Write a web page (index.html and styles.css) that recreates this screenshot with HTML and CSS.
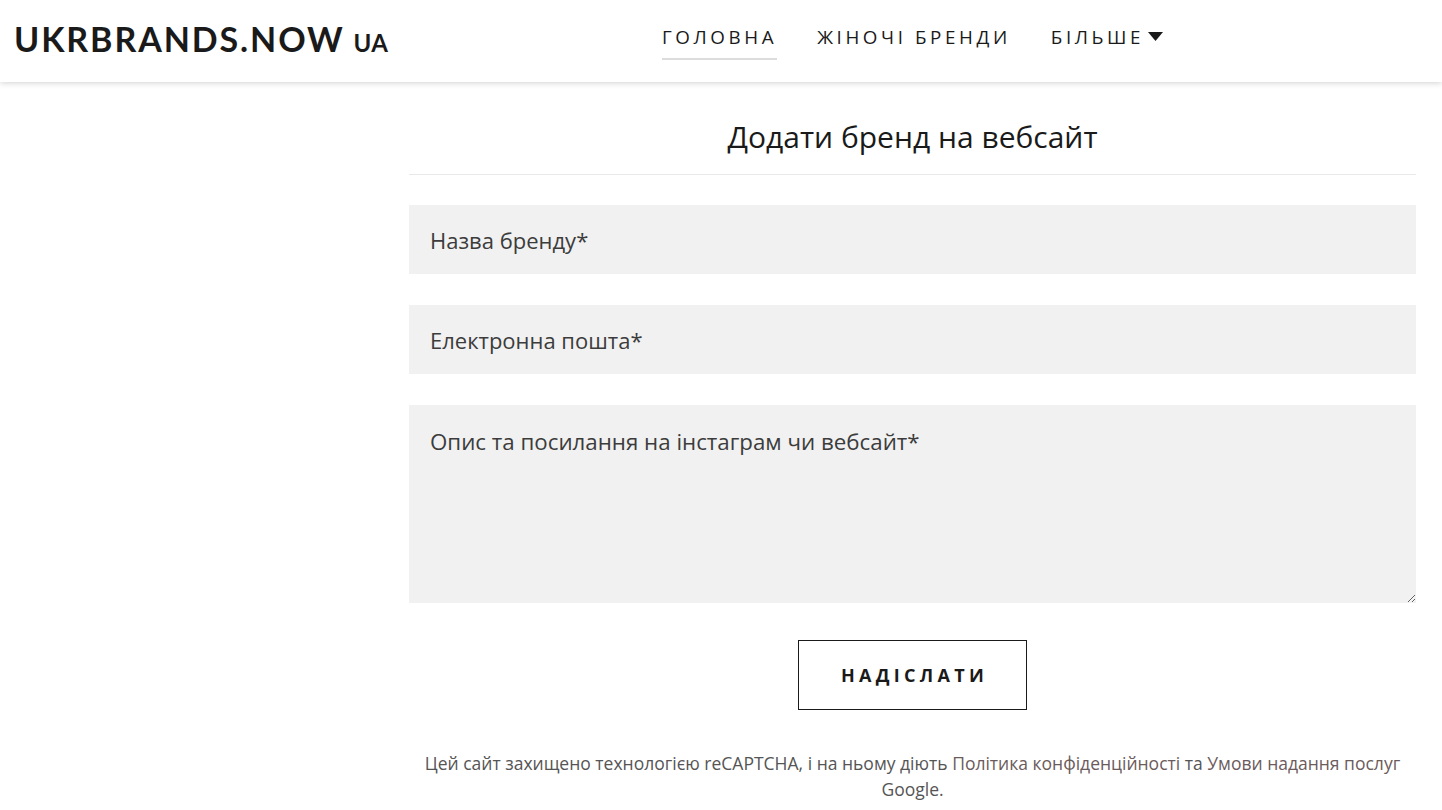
FILE: index.html
```html
<!DOCTYPE html>
<html lang="uk">
<head>
<meta charset="utf-8">
<title>UKRBRANDS.NOW UA</title>
<link rel="stylesheet" href="styles.css">
</head>
<body>
<header class="header">
  <div class="logo">UKRBRANDS.NOW <span class="logo-ua">UA</span></div>
  <nav class="nav">
    <a class="nav-item active" href="#">ГОЛОВНА</a>
    <a class="nav-item" href="#">ЖІНОЧІ БРЕНДИ</a>
    <a class="nav-item" href="#">БІЛЬШЕ <svg class="caret" width="15" height="9" viewBox="0 0 15 9"><path d="M0 0H15L7.5 9Z" fill="#1a1a1a"/></svg></a>
  </nav>
</header>
<main class="main">
  <div class="spacer"></div>
  <section class="content">
    <h1 class="title">Додати бренд на вебсайт</h1>
    <hr class="divider">
    <form class="form">
      <input class="field" type="text" placeholder="Назва бренду*">
      <input class="field" type="email" placeholder="Електронна пошта*">
      <textarea class="field area" placeholder="Опис та посилання на інстаграм чи вебсайт*"></textarea>
      <div class="btn-row"><button class="btn" type="button">НАДІСЛАТИ</button></div>
    </form>
    <p class="note">Цей сайт захищено технологією reCAPTCHA, і на ньому діють <a href="#">Політика конфіденційності</a> та <a href="#">Умови надання послуг</a> Google.</p>
  </section>
</main>
</body>
</html>
```
FILE: styles.css
```css
* { box-sizing: border-box; }
body {
  margin: 0;
  font-family: "Open Sans", "Liberation Sans", sans-serif;
  color: #1a1a1a;
  background: #fff;
}
.header {
  height: 82px;
  display: flex;
  align-items: center;
  background: #fff;
  box-shadow: 0 1px 6px rgba(0,0,0,0.18);
  position: relative;
}
.logo {
  width: 409px;
  padding-left: 14px;
  font-family: Lato, "Open Sans", sans-serif;
  font-weight: 700;
  font-size: 34px;
  letter-spacing: 1.9px;
  color: #1a1a1a;
  white-space: nowrap;
  margin-top: -6px;
}
.logo-ua {
  font-size: 24px;
  letter-spacing: 0.3px;
  margin-left: -1px;
}
.nav {
  flex: 1;
  display: flex;
  justify-content: center;
  gap: 40px;
  padding-right: 26px;
  margin-top: -6px;
}
.nav-item {
  font-size: 18.8px;
  letter-spacing: 3.6px;
  color: #1a1a1a;
  text-decoration: none;
  padding: 6px 0 8px;
  border-bottom: 2px solid transparent;
  display: flex;
  align-items: center;
  margin-top: 2px;
}
.nav-item.active { border-bottom-color: #dcdcdc; }
.caret { margin-left: 4px; margin-bottom: 2px; }
.main {
  display: flex;
}
.spacer { width: 409px; flex: none; }
.content {
  width: 1007px;
  flex: none;
}
.title {
  margin: 35px 0 0;
  text-align: center;
  font-weight: 400;
  font-size: 30px;
  line-height: 40px;
  color: #1a1a1a;
}
.divider {
  margin: 17px 0 0;
  border: 0;
  border-top: 1px solid #e9e9e9;
}
.form {
  margin-top: 30px;
  display: flex;
  flex-direction: column;
  gap: 31px;
}
.field {
  display: block;
  width: 100%;
  height: 69px;
  border: 0;
  background: #f1f1f1;
  padding: 0 21px;
  font-family: "Open Sans", "Liberation Sans", sans-serif;
  font-size: 22px;
  color: #333;
  outline: none;
}
.field::placeholder { color: #3c3c3c; opacity: 1; }
.area {
  height: 198px;
  padding-top: 22px;
  resize: vertical;
  line-height: 30px;
  font-size: 22.3px;
}
.btn-row {
  display: flex;
  justify-content: center;
  margin-top: 6px;
}
.btn {
  width: 229px;
  height: 70px;
  background: #fff;
  border: 1px solid #1a1a1a;
  font-family: "Open Sans", "Liberation Sans", sans-serif;
  font-weight: 700;
  font-size: 18px;
  letter-spacing: 4.3px;
  color: #1a1a1a;
  padding: 0 0 0 4px;
}
.note {
  margin: 40px 0 0;
  padding: 0 10px;
  text-align: center;
  font-size: 17.5px;
  line-height: 26px;
  color: #555;
}
.note a { color: #6b5b5b; text-decoration: none; }
```
